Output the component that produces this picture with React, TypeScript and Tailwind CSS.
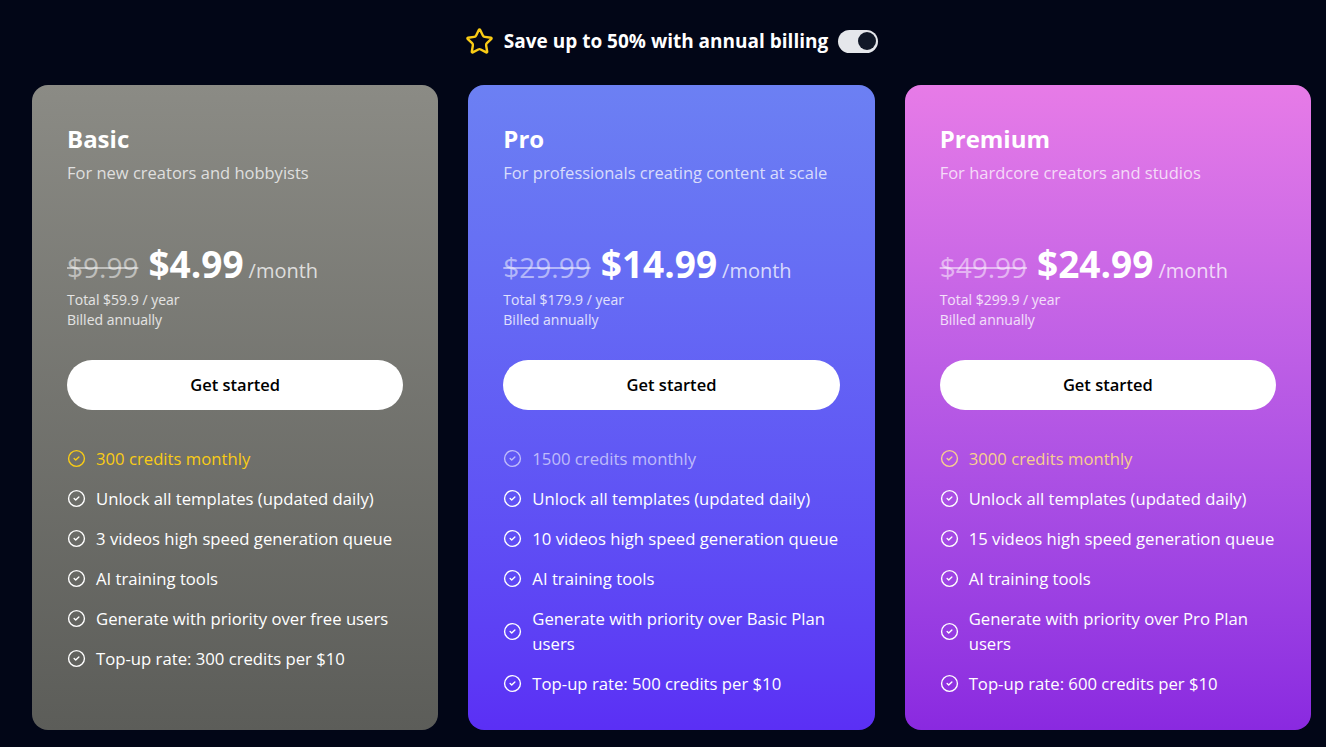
import { CircleCheck, Star } from "lucide-react";

interface Plan {
  name: string;
  tagline: string;
  oldPrice: string;
  price: string;
  total: string;
  bg: string;
  highlight: string;
  features: string[];
}

const plans: Plan[] = [
  {
    name: "Basic",
    tagline: "For new creators and hobbyists",
    oldPrice: "$9.99",
    price: "$4.99",
    total: "Total $59.9 / year",
    bg: "bg-gradient-to-b from-[#8b8b85] to-[#5c5d59]",
    highlight: "text-[#facc15]",
    features: [
      "300 credits monthly",
      "Unlock all templates (updated daily)",
      "3 videos high speed generation queue",
      "AI training tools",
      "Generate with priority over free users",
      "Top-up rate: 300 credits per $10",
    ],
  },
  {
    name: "Pro",
    tagline: "For professionals creating content at scale",
    oldPrice: "$29.99",
    price: "$14.99",
    total: "Total $179.9 / year",
    bg: "bg-gradient-to-b from-[#6c80f3] to-[#5b2ff5]",
    highlight: "text-white/60",
    features: [
      "1500 credits monthly",
      "Unlock all templates (updated daily)",
      "10 videos high speed generation queue",
      "AI training tools",
      "Generate with priority over Basic Plan users",
      "Top-up rate: 500 credits per $10",
    ],
  },
  {
    name: "Premium",
    tagline: "For hardcore creators and studios",
    oldPrice: "$49.99",
    price: "$24.99",
    total: "Total $299.9 / year",
    bg: "bg-gradient-to-b from-[#e77be7] to-[#8a29e0]",
    highlight: "text-[#f7cf8e]",
    features: [
      "3000 credits monthly",
      "Unlock all templates (updated daily)",
      "15 videos high speed generation queue",
      "AI training tools",
      "Generate with priority over Pro Plan users",
      "Top-up rate: 600 credits per $10",
    ],
  },
];

function PlanCard({ plan }: { plan: Plan }) {
  return (
    <div className={`${plan.bg} rounded-2xl px-[35px] pt-[38px] pb-[34px] text-white`}>
      <h2 className="text-[24px] leading-8 font-bold">{plan.name}</h2>
      <p className="mt-[6px] text-[16.5px] leading-6 text-white/75">{plan.tagline}</p>

      <div className="mt-[59px] flex items-baseline">
        <span className="text-[28px] leading-9 text-white/50 line-through">{plan.oldPrice}</span>
        <span className="ml-[10px] text-[37px] leading-10 font-bold">{plan.price}</span>
        <span className="ml-[5px] text-[20px] text-white/75">/month</span>
      </div>
      <div className="mt-[4px] text-[14px] leading-5 text-white/80">
        <div>{plan.total}</div>
        <div>Billed annually</div>
      </div>

      <button className="mt-[30px] w-full h-[50px] rounded-full bg-white text-black text-[16.5px] font-semibold">
        Get started
      </button>

      <ul className="mt-[36px] flex flex-col gap-[15px]">
        {plan.features.map((f, i) => (
          <li
            key={f}
            className={`flex items-center gap-[10px] text-[16.7px] leading-[25px] ${i === 0 ? plan.highlight : "text-white"}`}
          >
            <CircleCheck className="w-[19px] h-[19px] shrink-0" strokeWidth={1.75} />
            <span>{f}</span>
          </li>
        ))}
      </ul>
    </div>
  );
}

export default function App() {
  return (
    <div
      className="min-h-screen bg-[#020617] pt-[26px] pb-4"
      style={{ fontFamily: '"Open Sans", "Noto Sans", sans-serif' }}
    >
      <div className="ml-[32px] w-[1279px]">
        <div className="flex items-center justify-center gap-[10px] h-[30px]">
          <Star className="w-[29px] h-[29px] text-[#facc15]" strokeWidth={2} />
          <span className="text-[19px] font-bold text-white">Save up to 50% with annual billing</span>
          <div className="ml-[0px] w-[40px] h-[23px] rounded-full bg-[#e5e7eb] flex items-center justify-end px-[2px]">
            <div className="w-[18px] h-[18px] rounded-full bg-[#111827]" />
          </div>
        </div>

        <div className="mt-[29px] grid grid-cols-3 gap-[30px]">
          {plans.map((p) => (
            <PlanCard key={p.name} plan={p} />
          ))}
        </div>
      </div>
    </div>
  );
}
